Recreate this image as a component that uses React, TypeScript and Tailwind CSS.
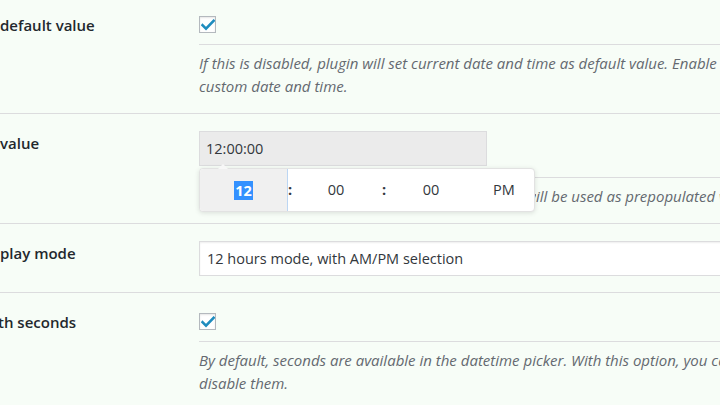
import React from "react";

const font = { fontFamily: '"Open Sans", "Noto Sans", sans-serif' };

function Check() {
  return (
    <span className="mt-[3px] flex h-[17px] w-[17px] items-center justify-center border border-[#b4b9be] bg-white shadow-[inset_0_1px_2px_rgba(0,0,0,0.1)]">
      <svg width="14" height="12" viewBox="0 0 14 12">
        <path d="M1.5 6.2 L5 9.6 L12.6 1.8" fill="none" stroke="#1e8cbe" strokeWidth="2.6" strokeLinecap="square" />
      </svg>
    </span>
  );
}

// the screenshot crops the label column, so the first words sit off to the left
function Label({ hidden, text, shift = "" }: { hidden: string; text: string; shift?: string }) {
  return (
    <div className="w-[199px] shrink-0 overflow-hidden">
      <div className={`mt-[2px] whitespace-nowrap text-[15px] leading-[20px] font-semibold text-[#23282d] ${shift}`}>
        <span className="relative">
          <span className="absolute right-full">{hidden}</span>
          {text}
        </span>
      </div>
    </div>
  );
}

function Desc({ children }: { children: React.ReactNode }) {
  return (
    <div className="mt-[11px] border-t border-[#dcdcde] pt-[7px] text-[15px] leading-[23px] italic text-[#646970]">
      {children}
    </div>
  );
}

export default function App() {
  return (
    <div className="h-[405px] w-[720px] overflow-hidden bg-[#f7fdf7]" style={font}>
      <div className="-mt-[4px]">
        {/* default value */}
        <div className="flex border-b border-[#dcdcde] pt-[17px] pb-[15px]">
          <Label hidden="Use " text="default value" />
          <div className="min-w-0 flex-1">
            <Check />
            <Desc>
              <div className="whitespace-nowrap">
                If this is disabled, plugin will set current date and time as default value. Enable this option to set
              </div>
              <div className="whitespace-nowrap">custom date and time.</div>
            </Desc>
          </div>
        </div>

        {/* value */}
        <div className="flex border-b border-[#dcdcde] pt-[17px] pb-[15px]">
          <Label hidden="Default " text="value" />
          <div className="relative min-w-0 flex-1">
            <div className="flex h-[35px] w-[288px] items-center border border-[#dcdcde] bg-[#ebebeb] pl-[6px] text-[14.5px] text-[#32373c]">
              12:00:00
            </div>
            <Desc>
              <div className="whitespace-nowrap">
                <span className="inline-block w-[337px] overflow-hidden text-right align-bottom">Time set in this field w</span>
                ill be used as prepopulated value in the field.
              </div>
            </Desc>

            {/* time picker popup */}
            <div className="absolute left-0 top-[37px] z-10 flex h-[44px] w-[336px] rounded-[4px] border border-[#e2e2e2] bg-white text-[14.5px] text-[#32373c] shadow-[0_1px_5px_rgba(0,0,0,0.12)]">
              <span className="absolute -top-[5px] left-[18px] h-0 w-0 border-x-[5px] border-b-[5px] border-x-transparent border-b-[#f7f7f7]" />
              <div className="flex w-[88px] items-center justify-center rounded-l-[4px] border-r border-[#bcd6f3] bg-[#f0f0f0]">
                <span className="bg-[#3391ff] px-[1px] leading-[19px] font-bold text-white">12</span>
              </div>
              <div className="flex w-[8px] items-center font-bold">:</div>
              <div className="flex w-[80px] items-center justify-center">00</div>
              <div className="flex w-[16px] items-center justify-center font-bold">:</div>
              <div className="flex w-[78px] items-center justify-center">00</div>
              <div className="flex flex-1 items-center justify-center pl-[4px]">PM</div>
            </div>
          </div>
        </div>

        {/* display mode */}
        <div className="flex border-b border-[#dcdcde] pt-[17px] pb-[16px]">
          <Label hidden="Dis" text="play mode" />
          <div className="min-w-0 flex-1">
            <div className="flex h-[35px] w-[560px] items-center border border-[#dcdcde] bg-white pl-[7px] text-[14.5px] text-[#32373c] shadow-[inset_0_1px_2px_rgba(0,0,0,0.07)]">
              12 hours mode, with AM/PM selection
            </div>
          </div>
        </div>

        {/* with seconds */}
        <div className="flex pt-[17px] pb-[15px]">
          <Label hidden="Picker wi" text="th seconds" shift="-ml-[2px]" />
          <div className="min-w-0 flex-1">
            <Check />
            <Desc>
              <div className="whitespace-nowrap">
                By default, seconds are available in the datetime picker. With this option, you can
              </div>
              <div className="whitespace-nowrap">disable them.</div>
            </Desc>
          </div>
        </div>
      </div>
    </div>
  );
}
